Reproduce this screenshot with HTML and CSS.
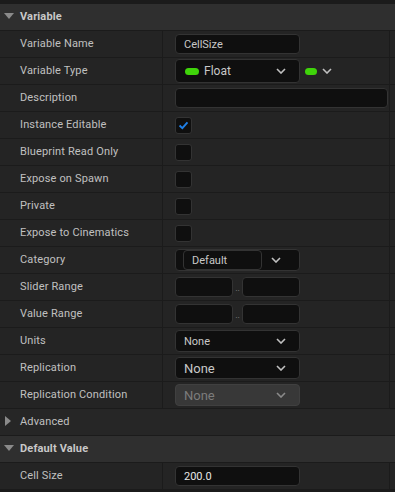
FILE: index.html
```html
<!DOCTYPE html>
<html lang="en">
<head>
  <meta charset="UTF-8">
  <title>Variable Details</title>
  <link rel="stylesheet" href="styles.css">
</head>
<body>
  <div class="panel">
    <div class="section">
      <span class="arrow down"></span>Variable
    </div>

    <div class="row">
      <div class="label">Variable Name</div>
      <div class="value"><div class="input w124">CellSize</div></div>
      <div class="gutter"></div>
    </div>

    <div class="row">
      <div class="label">Variable Type</div>
      <div class="value">
        <div class="combo tall w124">
          <span class="pill"></span>
          <span class="combo-text big">Float</span>
          <svg class="chev" viewBox="0 0 10 6"><path d="M1 1 L5 5 L9 1"/></svg>
        </div>
        <span class="pill side"></span>
        <svg class="chev" viewBox="0 0 10 6"><path d="M1 1 L5 5 L9 1"/></svg>
      </div>
      <div class="gutter"></div>
    </div>

    <div class="row">
      <div class="label">Description</div>
      <div class="value"><div class="input wide"></div></div>
      <div class="gutter"></div>
    </div>

    <div class="row">
      <div class="label">Instance Editable</div>
      <div class="value">
        <div class="check">
          <svg viewBox="0 0 17 17"><path d="M4 8.5 L7.2 11.5 L13 5"/></svg>
        </div>
      </div>
      <div class="gutter"></div>
    </div>

    <div class="row">
      <div class="label">Blueprint Read Only</div>
      <div class="value"><div class="check"></div></div>
      <div class="gutter"></div>
    </div>

    <div class="row">
      <div class="label">Expose on Spawn</div>
      <div class="value"><div class="check"></div></div>
      <div class="gutter"></div>
    </div>

    <div class="row">
      <div class="label">Private</div>
      <div class="value"><div class="check"></div></div>
      <div class="gutter"></div>
    </div>

    <div class="row">
      <div class="label">Expose to Cinematics</div>
      <div class="value"><div class="check"></div></div>
      <div class="gutter"></div>
    </div>

    <div class="row">
      <div class="label">Category</div>
      <div class="value">
        <div class="combo category w124">
          <div class="inner">Default</div>
          <svg class="chev" viewBox="0 0 10 6"><path d="M1 1 L5 5 L9 1"/></svg>
        </div>
      </div>
      <div class="gutter"></div>
    </div>

    <div class="row">
      <div class="label">Slider Range</div>
      <div class="value">
        <div class="range">
          <div class="input small"></div>
          <span class="dots">..</span>
          <div class="input small"></div>
        </div>
      </div>
      <div class="gutter"></div>
    </div>

    <div class="row">
      <div class="label">Value Range</div>
      <div class="value">
        <div class="range">
          <div class="input small"></div>
          <span class="dots">..</span>
          <div class="input small"></div>
        </div>
      </div>
      <div class="gutter"></div>
    </div>

    <div class="row">
      <div class="label">Units</div>
      <div class="value">
        <div class="combo w124">
          <span class="combo-text">None</span>
          <svg class="chev" viewBox="0 0 10 6"><path d="M1 1 L5 5 L9 1"/></svg>
        </div>
      </div>
      <div class="gutter"></div>
    </div>

    <div class="row">
      <div class="label">Replication</div>
      <div class="value">
        <div class="combo w124">
          <span class="combo-text large">None</span>
          <svg class="chev" viewBox="0 0 10 6"><path d="M1 1 L5 5 L9 1"/></svg>
        </div>
      </div>
      <div class="gutter"></div>
    </div>

    <div class="row">
      <div class="label">Replication Condition</div>
      <div class="value">
        <div class="combo disabled w124">
          <span class="combo-text large">None</span>
          <svg class="chev" viewBox="0 0 10 6"><path d="M1 1 L5 5 L9 1"/></svg>
        </div>
      </div>
      <div class="gutter"></div>
    </div>

    <div class="row full">
      <div class="label"><span class="arrow right"></span>Advanced</div>
    </div>

    <div class="section">
      <span class="arrow down"></span>Default Value
    </div>

    <div class="row">
      <div class="label">Cell Size</div>
      <div class="value"><div class="input w124 bright">200.0</div></div>
      <div class="gutter"></div>
    </div>
  </div>
</body>
</html>
```

FILE: styles.css
```css
body {
  margin: 0;
  background: #1b1b1b;
  font-family: Roboto, "Liberation Sans", sans-serif;
  font-size: 11px;
  color: #c0c0c0;
}
.panel {
  padding-top: 4px;
  width: 395px;
  height: 492px;
  box-sizing: border-box;
  background: #1b1b1b;
}
.section {
  height: 26px;
  box-sizing: border-box;
  padding-bottom: 2px;
  border-bottom: 1px solid #1b1b1b;
  background: #2f2f2f;
  display: flex;
  align-items: center;
  font-weight: bold;
  color: #c8c8c8;
  padding-left: 4px;
  letter-spacing: 0.15px;
  height: 27px;
}
.arrow {
  display: inline-block;
  width: 0;
  height: 0;
  margin-right: 6px;
}
.arrow.down {
  border-left: 5px solid transparent;
  border-right: 5px solid transparent;
  border-top: 6px solid #8a8a8a;
}
.arrow.right {
  border-top: 5px solid transparent;
  border-bottom: 5px solid transparent;
  border-left: 6px solid #8a8a8a;
  position: relative;
  left: -15px;
  margin-right: -6px;
}
.row {
  display: grid;
  grid-template-columns: 163px 227px 4px;
  height: 26px;
  border-bottom: 1px solid #1b1b1b;
  background: #242424;
}
.row.full {
  display: flex;
  align-items: center;
  background: #262626;
}
.label {
  display: flex;
  align-items: center;
  box-sizing: border-box;
  padding-left: 20px;
  padding-bottom: 2px;
  border-right: 1px solid #1b1b1b;
  letter-spacing: 0.15px;
}
.row.full .label {
  border-right: none;
  height: 26px;
}
.value {
  display: flex;
  align-items: center;
  padding-left: 12px;
  border-right: 1px solid #1b1b1b;
  gap: 5px;
}
.gutter {
  background: #242424;
}
.input {
  box-sizing: border-box;
  height: 20px;
  background: #0f0f0f;
  border: 1px solid #333;
  border-radius: 4px;
  padding-left: 8px;
  display: flex;
  align-items: center;
  color: #c8c8c8;
}
.input.bright {
  color: #e6e6e6;
}
.w124 {
  width: 125px;
}
.wide {
  width: 213px;
}
.input.small {
  width: 58px;
}
.range {
  display: flex;
  align-items: center;
}
.dots {
  width: 9px;
  text-align: center;
  font-size: 9px;
  color: #888;
  position: relative;
  top: 1px;
}
.combo {
  box-sizing: border-box;
  height: 22px;
  background: #0f0f0f;
  border: 1px solid #333;
  border-radius: 4px;
  display: flex;
  align-items: center;
  padding: 0 8px;
  position: relative;
}
.combo.tall {
  height: 24px;
  padding-left: 9px;
}
.combo-text {
  flex: 1;
  color: #c8c8c8;
}
.combo-text.big {
  font-size: 12px;
}
.combo-text.large {
  font-size: 13px;
}
.combo.disabled {
  background: #383838;
  border-color: #404040;
}
.combo.disabled .combo-text {
  color: #7c7c7c;
}
.combo.disabled .chev path {
  stroke: #8a8a8a;
}
.chev {
  width: 10px;
  height: 6px;
  margin-right: 5px;
}
.chev path {
  fill: none;
  stroke: #c0c0c0;
  stroke-width: 1.6;
}
.pill {
  display: inline-block;
  width: 14px;
  height: 7px;
  border-radius: 4px;
  background: #3fd40a;
  margin-right: 5px;
}
.pill.side {
  width: 12px;
  margin-right: 0;
  margin-left: 0;
}
.check {
  width: 17px;
  height: 17px;
  box-sizing: border-box;
  background: #0f0f0f;
  border: 1px solid #333;
  border-radius: 3px;
}
.check svg {
  display: block;
  width: 15px;
  height: 15px;
}
.check path {
  fill: none;
  stroke: #1f7fe6;
  stroke-width: 2.2;
}
.combo.category {
  padding-left: 7px;
  height: 22px;
}
.category .inner {
  box-sizing: border-box;
  width: 79px;
  height: 20px;
  border: 1px solid #333;
  border-radius: 4px;
  display: flex;
  align-items: center;
  padding-left: 8px;
  margin-right: 9px;
  color: #c8c8c8;
}
```
